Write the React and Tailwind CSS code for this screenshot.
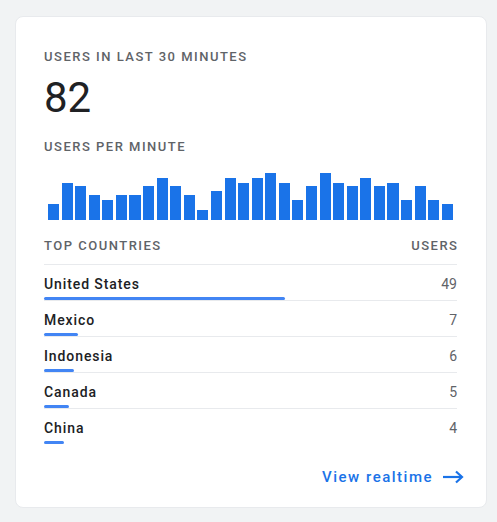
import React from "react";

const perMinute = [16, 37, 34, 25, 20, 25, 25, 34, 42, 34, 25, 10, 29, 42, 37, 42, 47, 37, 20, 34, 47, 37, 34, 42, 34, 37, 20, 34, 20, 16];

const countries = [
  { name: "United States", users: 49 },
  { name: "Mexico", users: 7 },
  { name: "Indonesia", users: 6 },
  { name: "Canada", users: 5 },
  { name: "China", users: 4 },
];

const TOTAL = 82;

export default function App() {
  return (
    <div className="min-h-screen bg-[#f1f3f4] px-[15px] py-[16px] font-['Roboto',sans-serif]">
      <div className="w-[472px] h-[492px] bg-white rounded-lg border border-[#e8eaed] pl-[28px] pr-[29px] pt-[32px]">
        <div className="text-[13px] leading-4 tracking-[1.5px] text-[#5f6368] font-medium">
          USERS IN LAST 30 MINUTES
        </div>
        <div className="mt-3 text-[42px] leading-[42px] text-[#202124]">{TOTAL}</div>

        <div className="mt-[20px] text-[13px] leading-4 tracking-[1.5px] text-[#5f6368] font-medium">
          USERS PER MINUTE
        </div>
        <div className="mt-[18px] h-[47px] flex items-end gap-[2.5px] pl-[4px] pr-[4px]">
          {perMinute.map((h, i) => (
            <div key={i} className="flex-1 bg-[#1a73e8]" style={{ height: h }} />
          ))}
        </div>

        <div className="mt-[18px] flex justify-between text-[13px] leading-4 tracking-[1.5px] text-[#5f6368] font-medium pb-[10px] border-b border-[#e8eaed]">
          <span>TOP COUNTRIES</span>
          <span className="-mr-[1.5px]">USERS</span>
        </div>

        <div>
          {countries.map((c, i) => (
            <div key={c.name} className={`pt-[9px] ${i < countries.length - 1 ? "border-b border-[#e8eaed]" : ""}`}>
              <div className="flex justify-between text-[14px] leading-5">
                <span className="text-[#202124] font-medium tracking-[0.9px]">{c.name}</span>
                <span className="text-[#5f6368]">{c.users}</span>
              </div>
              <div className="mt-[3px] h-[3px] bg-[#4285f4] rounded-full" style={{ width: `${(c.users / 84) * 100}%` }} />
            </div>
          ))}
        </div>

        <div className="mt-[23px] flex justify-end items-center gap-[9px] text-[#1a73e8]">
          <span className="text-[15px] leading-5 font-medium tracking-[1.5px]">View realtime</span>
          <svg width="22" height="14" viewBox="0 0 22 14" fill="none" stroke="currentColor" strokeWidth="2.2" className="-mr-[7px]">
            <path d="M1 7H20" />
            <path d="M14 1.5L20 7L14 12.5" />
          </svg>
        </div>
      </div>
    </div>
  );
}
